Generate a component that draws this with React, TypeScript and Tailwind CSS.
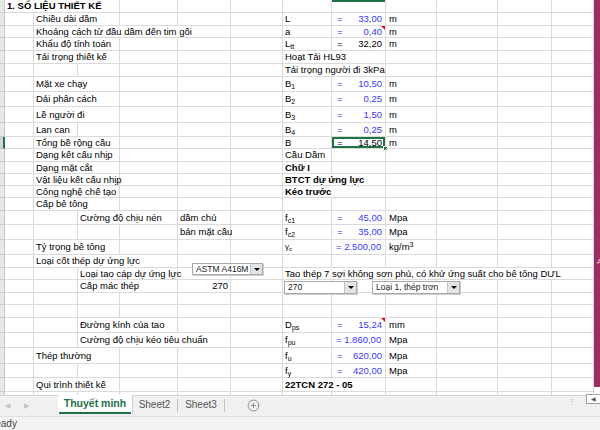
import React from "react";
import { CirclePlus } from "lucide-react";

const SPAN: Record<number, string> = {
  1: "col-span-1",
  2: "col-span-2",
  3: "col-span-3",
  4: "col-span-4",
  5: "col-span-5",
  6: "col-span-6",
};

type CellProps = {
  span?: number;
  children?: React.ReactNode;
  className?: string;
};

function C({ span = 1, children, className = "" }: CellProps) {
  return (
    <div
      className={`${SPAN[span]} relative flex items-center whitespace-nowrap border-r border-b border-[#dadada] px-[2px] ${className}`}
    >
      {children}
    </div>
  );
}

function Empty({ n }: { n: number }) {
  return (
    <>
      {Array.from({ length: n }).map((_, i) => (
        <C key={i} />
      ))}
    </>
  );
}

function Row({
  h,
  sel = false,
  children,
}: {
  h: string;
  sel?: boolean;
  children: React.ReactNode;
}) {
  return (
    <div
      className={`grid grid-cols-[5px_29px_44px_42px_58px_53px_52px_49px_54px_51px_61px_54px_42px] ${h}`}
    >
      <div
        className={
          sel
            ? "border-b border-r-2 border-b-[#c8c8c8] border-r-[#217346] bg-[#d4d4d4]"
            : "border-b border-r border-[#c8c8c8] bg-[#e8e8e8]"
        }
      />
      {children}
    </div>
  );
}

function Sym({ base, sub }: { base: string; sub?: string }) {
  return (
    <C>
      <span>
        {base}
        {sub && <sub className="text-[7px]">{sub}</sub>}
      </span>
    </C>
  );
}

function Val({
  v,
  blue = true,
  tri = false,
  sel = false,
}: {
  v: string;
  blue?: boolean;
  tri?: boolean;
  sel?: boolean;
}) {
  return (
    <C
      className={`justify-between pl-[5px] pr-[3px] ${
        blue ? "text-[#3838f8]" : "text-black"
      } ${sel ? "shadow-[inset_0_0_0_2px_#217346]" : ""}`}
    >
      <span>=</span>
      <span>{v}</span>
      {tri && (
        <span className="absolute right-0 top-0 h-0 w-0 border-l-[4px] border-t-[4px] border-l-transparent border-t-[#e01010]" />
      )}
      {sel && (
        <span className="absolute -bottom-[3px] -right-[3px] h-[5px] w-[5px] border border-white bg-[#217346]" />
      )}
    </C>
  );
}

function Dropdown({ text, className }: { text: string; className: string }) {
  return (
    <div
      className={`absolute flex items-stretch border border-[#a8a8a8] bg-white shadow-[1px_1px_0_#d0d0d0] ${className}`}
    >
      <div className="flex flex-1 items-center whitespace-nowrap pl-[3px] text-[8.5px] leading-none text-[#222]">
        {text}
      </div>
      <div className="flex w-[12px] items-center justify-center border-l border-[#c4c4c4] bg-[#e4e4e4]">
        <span className="h-0 w-0 border-x-[3px] border-t-[3px] border-x-transparent border-t-black" />
      </div>
    </div>
  );
}

export default function App() {
  return (
    <div
      className="flex h-[430px] w-[600px] flex-col overflow-hidden bg-white text-[9.5px] leading-none text-black"
      style={{ fontFamily: '"Liberation Sans", Arial, sans-serif' }}
    >
      <div className="flex h-[395px] shrink-0">
        <div className="relative h-[395px] w-[594px] overflow-hidden">
          {/* r1 */}
          <Row h="h-[13px]">
            <C span={3} className="pl-[2px] text-[9.5px] font-bold">
              1. SỐ LIỆU THIẾT KẾ
            </C>
            <Empty n={3} />
            <C />
            <C className="shadow-[inset_0_2px_0_#217346]" />
            <Empty n={4} />
          </Row>
          {/* r2 */}
          <Row h="h-[13px]">
            <C />
            <C span={2}>Chiều dài dầm</C>
            <Empty n={3} />
            <Sym base="L" />
            <Val v="33,00" />
            <C className="pl-[3px]">m</C>
            <Empty n={3} />
          </Row>
          {/* r3 */}
          <Row h="h-[12px]">
            <C />
            <C span={4}>Khoảng cách từ đầu dầm đến tim gối</C>
            <C />
            <Sym base="a" />
            <Val v="0,40" tri />
            <C className="pl-[3px]">m</C>
            <Empty n={3} />
          </Row>
          {/* r4 */}
          <Row h="h-[13px]">
            <C />
            <C span={2}>Khẩu độ tính toán</C>
            <Empty n={3} />
            <Sym base="L" sub="tt" />
            <Val v="32,20" blue={false} />
            <C className="pl-[3px]">m</C>
            <Empty n={3} />
          </Row>
          {/* r5 */}
          <Row h="h-[13px]">
            <C />
            <C span={2}>Tải trọng thiết kế</C>
            <Empty n={3} />
            <C span={2}>Hoạt Tải HL93</C>
            <Empty n={4} />
          </Row>
          {/* r6 */}
          <Row h="h-[13px]">
            <Empty n={6} />
            <C span={2}>Tải trọng người đi 3kPa</C>
            <Empty n={4} />
          </Row>
          {/* r7 */}
          <Row h="h-[15px]">
            <C />
            <C span={2}>Mặt xe chạy</C>
            <Empty n={3} />
            <Sym base="B" sub="1" />
            <Val v="10,50" />
            <C className="pl-[3px]">m</C>
            <Empty n={3} />
          </Row>
          {/* r8 */}
          <Row h="h-[15px]">
            <C />
            <C span={2}>Dải phân cách</C>
            <Empty n={3} />
            <Sym base="B" sub="2" />
            <Val v="0,25" />
            <C className="pl-[3px]">m</C>
            <Empty n={3} />
          </Row>
          {/* r9 */}
          <Row h="h-[16px]">
            <C />
            <C span={2}>Lề người đi</C>
            <Empty n={3} />
            <Sym base="B" sub="3" />
            <Val v="1,50" />
            <C className="pl-[3px]">m</C>
            <Empty n={3} />
          </Row>
          {/* r10 */}
          <Row h="h-[14px]">
            <C />
            <C>Lan can</C>
            <Empty n={4} />
            <Sym base="B" sub="4" />
            <Val v="0,25" />
            <C className="pl-[3px]">m</C>
            <Empty n={3} />
          </Row>
          {/* r11 */}
          <Row h="h-[12px]" sel>
            <C />
            <C span={2}>Tổng bề rộng cầu</C>
            <Empty n={3} />
            <Sym base="B" />
            <Val v="14,50" blue={false} sel />
            <C className="pl-[3px]">m</C>
            <Empty n={3} />
          </Row>
          {/* r12 */}
          <Row h="h-[13px]">
            <C />
            <C span={2}>Dạng kết cấu nhịp</C>
            <Empty n={3} />
            <C>Cầu Dầm</C>
            <Empty n={5} />
          </Row>
          {/* r13 */}
          <Row h="h-[12px]">
            <C />
            <C span={2}>Dạng mặt cắt</C>
            <Empty n={3} />
            <C className="font-bold">Chữ I</C>
            <Empty n={5} />
          </Row>
          {/* r14 */}
          <Row h="h-[12px]">
            <C />
            <C span={2}>Vật liệu kết cấu nhịp</C>
            <Empty n={3} />
            <C span={2} className="font-bold">
              BTCT dự ứng lực
            </C>
            <Empty n={4} />
          </Row>
          {/* r15 */}
          <Row h="h-[12px]">
            <C />
            <C span={2}>Công nghệ chế tạo</C>
            <Empty n={3} />
            <C span={2} className="font-bold">
              Kéo trước
            </C>
            <Empty n={4} />
          </Row>
          {/* r16 */}
          <Row h="h-[13px]">
            <C />
            <C span={2}>Cấp bê tông</C>
            <Empty n={9} />
          </Row>
          {/* r17 */}
          <Row h="h-[14px]">
            <C />
            <C />
            <C span={2}>Cường độ chịu nén</C>
            <C>dầm chủ</C>
            <C />
            <Sym base="f" sub="c1" />
            <Val v="45,00" />
            <C className="pl-[3px]">Mpa</C>
            <Empty n={3} />
          </Row>
          {/* r18 */}
          <Row h="h-[15px]">
            <Empty n={4} />
            <C>bản mặt cầu</C>
            <C />
            <Sym base="f" sub="c2" />
            <Val v="35,00" />
            <C className="pl-[3px]">Mpa</C>
            <Empty n={3} />
          </Row>
          {/* r19 */}
          <Row h="h-[15px]">
            <C />
            <C span={2}>Tỷ trọng bê tông</C>
            <Empty n={3} />
            <C className="text-[8px]">
              <span>
                γ<sub className="text-[6px]">c</sub>
              </span>
            </C>
            <C className="pl-[4px] pr-[3px] text-[#3838f8]">
              <span>= 2.500,00</span>
            </C>
            <C className="pl-[3px]">
              <span>
                kg/m<sup className="text-[7px]">3</sup>
              </span>
            </C>
            <Empty n={3} />
          </Row>
          {/* r20 */}
          <Row h="h-[13px]">
            <C />
            <C span={3}>Loại cốt thép dự ứng lực</C>
            <Empty n={8} />
          </Row>
          {/* r21 */}
          <Row h="h-[12px]">
            <C />
            <C />
            <C span={2}>Loại tao cáp dự ứng lực</C>
            <Empty n={2} />
            <C span={6}>Tao thép 7 sợi không sơn phủ, có khử ứng suất cho bê tông DƯL</C>
          </Row>
          {/* r22 */}
          <Row h="h-[13px]">
            <C />
            <C />
            <C span={2}>Cấp mác thép</C>
            <C className="justify-end">270</C>
            <Empty n={7} />
          </Row>
          {/* r23 */}
          <Row h="h-[12px]">
            <Empty n={12} />
          </Row>
          {/* r24 */}
          <Row h="h-[13px]">
            <Empty n={12} />
          </Row>
          {/* r25 */}
          <Row h="h-[15px]">
            <C />
            <C />
            <C span={2}>Đường kính của tao</C>
            <Empty n={2} />
            <Sym base="D" sub="ps" />
            <Val v="15,24" tri />
            <C className="pl-[3px]">mm</C>
            <Empty n={3} />
          </Row>
          {/* r26 */}
          <Row h="h-[15px]">
            <C />
            <C />
            <C span={3}>Cường độ chịu kéo tiêu chuẩn</C>
            <C />
            <Sym base="f" sub="pu" />
            <C className="pl-[4px] pr-[3px] text-[#3838f8]">= 1.860,00</C>
            <C className="pl-[3px]">Mpa</C>
            <Empty n={3} />
          </Row>
          {/* r27 */}
          <Row h="h-[16px]">
            <C />
            <C span={2}>Thép thường</C>
            <Empty n={3} />
            <Sym base="f" sub="u" />
            <Val v="620,00" />
            <C className="pl-[3px]">Mpa</C>
            <Empty n={3} />
          </Row>
          {/* r28 */}
          <Row h="h-[14px]">
            <Empty n={6} />
            <Sym base="f" sub="y" />
            <Val v="420,00" />
            <C className="pl-[3px]">Mpa</C>
            <Empty n={3} />
          </Row>
          {/* r29 */}
          <Row h="h-[14px]">
            <C />
            <C span={2}>Qui trình thiết kế</C>
            <Empty n={3} />
            <C span={2} className="font-bold">
              22TCN 272 - 05
            </C>
            <Empty n={4} />
          </Row>
          {/* r30 */}
          <Row h="h-[14px]">
            <Empty n={12} />
          </Row>

          <Dropdown text="ASTM A416M" className="left-[192px] top-[263px] h-[12px] w-[71px]" />
          <Dropdown text="270" className="left-[284px] top-[281px] h-[13px] w-[73px]" />
          <Dropdown text="Loại 1, thép trơn" className="left-[372px] top-[281px] h-[13px] w-[88px]" />
        </div>
        <div className="flex w-[6px] flex-col">
          <div className="relative h-[387px] bg-[#9a2f62]">
            <span className="absolute left-[3px] top-[258px] text-[8px] text-white/80">A</span>
          </div>
          <div className="flex-1 bg-white" />
        </div>
      </div>

      {/* tab bar */}
      <div className="flex h-[21px] shrink-0 items-start border-t border-[#d0d0d0] bg-[#f0f0f0]">
        <div className="flex h-[18px] w-[58px] items-center text-[7px] text-[#c2c2c2]">
          <span className="ml-[5px]">◀</span>
          <span className="ml-[14px]">▶</span>
        </div>
        <div className="-mt-px flex h-[19px] w-[74px] flex-col bg-white shadow-[1px_0_0_#cfcfcf]">
          <div className="flex flex-1 items-center justify-center text-[10.5px] font-bold text-[#217346]">
            Thuyết minh
          </div>
          <div className="mx-[1px] h-[2px] bg-[#217346]" />
        </div>
        <div className="flex h-[18px] w-[46px] items-center">
          <span className="flex-1 text-center text-[10px] text-[#555]">Sheet2</span>
          <span className="h-[13px] w-px bg-[#c4c4c4]" />
        </div>
        <div className="flex h-[18px] w-[47px] items-center">
          <span className="flex-1 text-center text-[10px] text-[#555]">Sheet3</span>
          <span className="h-[13px] w-px bg-[#c4c4c4]" />
        </div>
        <div className="ml-[22px] flex h-[18px] items-center">
          <CirclePlus size={13} strokeWidth={1.3} color="#6a6a6a" />
        </div>
        <div className="ml-auto flex h-[10px] items-center pt-[2px] text-[8px] text-[#b0b0b0]">⋮</div>
        <div className="ml-[10px] -mt-[2px] flex h-[10px] w-[14px] items-center justify-center border border-r-0 border-[#a0a0a0] bg-white text-[6px] text-[#555]">
          ◀
        </div>
      </div>

      {/* status bar */}
      <div className="flex flex-1 items-center border-t border-[#e0e0e0] bg-[#f3f3f3] text-[10px] text-[#444]">
        <span className="-ml-[12px]">Ready</span>
      </div>
    </div>
  );
}
